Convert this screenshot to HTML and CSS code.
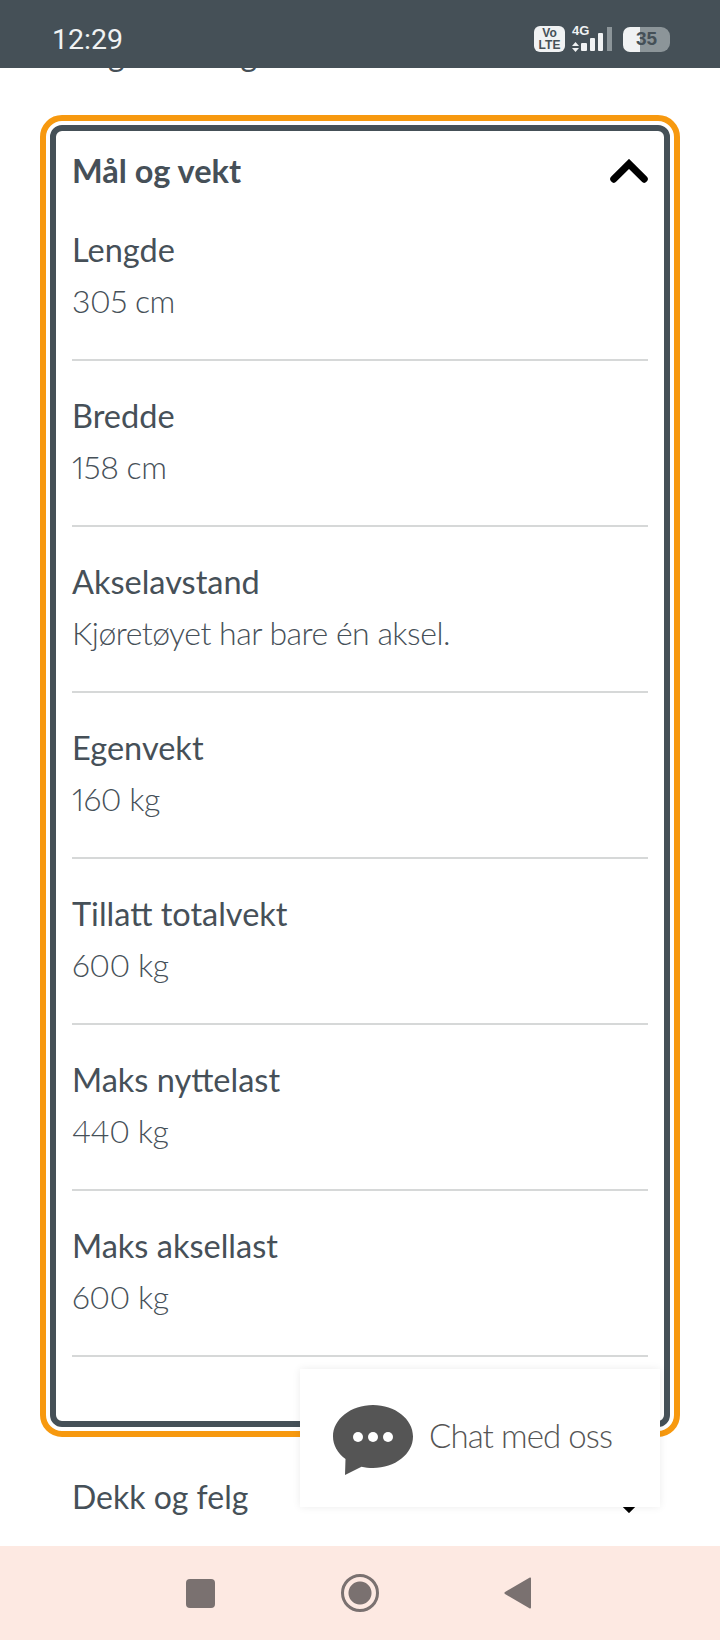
FILE: index.html
```html
<!DOCTYPE html>
<html lang="no">
<head>
<meta charset="utf-8">
<title>Mål og vekt</title>
<link rel="stylesheet" href="styles.css">
</head>
<body>
<div class="phone">
  <header class="status">
    <span class="time">12:29</span>
    <div class="status-icons">
      <div class="volte"><span>Vo</span><span>LTE</span></div>
      <div class="net">
        <span class="net-label">4G</span>
        <svg class="net-arrows" width="7" height="10" viewBox="0 0 7 10"><path d="M3.500 0 7 4H0zM0 6h7l-3.500 4z" fill="#f0f2f3"/></svg>
      </div>
      <svg class="bars" width="31" height="25" viewBox="0 0 31 25"><rect x="0" y="16" width="6" height="8" rx="1" fill="#f0f2f3"/><rect x="9" y="11" width="5" height="13" rx="1" fill="#f0f2f3"/><rect x="17" y="6" width="5" height="18" rx="1" fill="#f0f2f3"/><rect x="26" y="0" width="5" height="24" fill="#8c9599"/></svg>
      <div class="battery"><span class="battery-level">35</span></div>
    </div>
  </header>

  <main class="content">
    <div class="cut-row">Regulert lengde</div>

    <section class="panel">
      <div class="panel-inner">
        <div class="panel-head">
          <h2>Mål og vekt</h2>
          <svg class="chev" width="40" height="26" viewBox="0 0 40 26"><path d="M4 21 20 5l16 16" fill="none" stroke="#000" stroke-width="7.500" stroke-linecap="round" stroke-linejoin="miter"/></svg>
        </div>
        <div class="row"><div class="label">Lengde</div><div class="value">305 cm</div></div>
        <div class="row"><div class="label">Bredde</div><div class="value">158 cm</div></div>
        <div class="row"><div class="label">Akselavstand</div><div class="value">Kjøretøyet har bare én aksel.</div></div>
        <div class="row"><div class="label">Egenvekt</div><div class="value">160 kg</div></div>
        <div class="row"><div class="label">Tillatt totalvekt</div><div class="value">600 kg</div></div>
        <div class="row"><div class="label">Maks nyttelast</div><div class="value">440 kg</div></div>
        <div class="row"><div class="label">Maks aksellast</div><div class="value">600 kg</div></div>
      </div>
    </section>

    <div class="collapsed">
      <span>Dekk og felg</span>
      <svg class="chev chev-down" width="40" height="26" viewBox="0 0 40 26"><path d="M4 5 20 21 36 5" fill="none" stroke="#000" stroke-width="7.500" stroke-linecap="round"/></svg>
    </div>
  </main>

  <aside class="chat">
    <svg width="80" height="70" viewBox="0 0 80 70"><path d="M40 0C62 0 80 14 80 31.500 80 49 62 63 40 63c-4 0-8-.4-11.500-1.300L12 70l.500-16C4.500 48 0 40 0 31.500 0 14 18 0 40 0z" fill="#555"/><circle cx="25" cy="32" r="5" fill="#fff"/><circle cx="40" cy="32" r="5" fill="#fff"/><circle cx="55" cy="32" r="5" fill="#fff"/></svg>
    <span class="chat-text">Chat med oss</span>
  </aside>

  <nav class="navbar">
    <span class="nav-square"></span>
    <span class="nav-circle"></span>
    <svg width="28" height="32" viewBox="0 0 28 32"><path d="M27 1.500v29a1 1 0 0 1-1.600.8L1 17a1.300 1.300 0 0 1 0-2L25.400.700A1 1 0 0 1 27 1.500z" fill="#7a7170"/></svg>
  </nav>
</div>
</body>
</html>
```
FILE: styles.css
```css
* { box-sizing: border-box; }
html, body { margin: 0; padding: 0; }
body { font-family: Lato, "Open Sans", sans-serif; color: #465058; background: #fff; }
.phone { position: relative; width: 720px; height: 1640px; display: flex; flex-direction: column; overflow: hidden; }

.status { flex: 0 0 68px; background: #455057; display: flex; align-items: center; justify-content: space-between; padding: 10px 50px 0 52px; z-index: 1; }
.time { font-family: Roboto, sans-serif; font-weight: 400; font-size: 28.500px; color: #f0f2f3; }
.status-icons { display: flex; align-items: center; }
.volte { width: 31px; height: 26px; border-radius: 6px; background: #f0f2f3; color: #455057; font-family: "Liberation Sans", sans-serif; font-weight: 700; font-size: 12px; line-height: 12px; display: flex; flex-direction: column; align-items: center; justify-content: center; }
.net { width: 9px; margin-left: 7px; height: 26px; display: flex; flex-direction: column; justify-content: space-between; }
.net-label { font-family: "Liberation Sans", sans-serif; font-weight: 700; font-size: 13px; line-height: 10px; color: #f0f2f3; white-space: nowrap; }
.bars { margin-top: 1px; }
.battery { width: 47px; height: 25px; margin-left: 11px; border-radius: 7px 9px 9px 7px; background: linear-gradient(90deg, #f0f2f3 0 17px, #8c9599 17px); display: flex; align-items: center; justify-content: center; }
.battery-level { font-family: "Liberation Sans", sans-serif; font-weight: 700; font-size: 19px; color: #455057; }

.content { flex: 1 1 0; min-height: 0; overflow: hidden; padding: 0 40px; }
.cut-row { height: 47px; margin: -38px 0 38px; padding-left: 32px; font-size: 32px; line-height: 47px; white-space: nowrap; color: #465058; }
.panel { height: 1322px; border: 6px solid #f7990f; border-radius: 22px; padding: 4px; background: #fff; }
.panel-inner { height: 100%; border: 6px solid #455057; border-radius: 12px; padding: 0 16px; }
.panel-head { height: 64px; display: flex; align-items: center; justify-content: space-between; padding-top: 16px; }
.panel-head h2 { margin: 0; font-size: 32.500px; font-weight: 700; line-height: 48px; color: #465058; }
.chev { display: block; width: 38px; height: 25px; margin-right: 0; flex: none; }
.chev-down { position: relative; top: 3px; }
.row { height: 166px; padding-top: 37px; border-bottom: 2px solid #d6d8d8; }
.label { font-size: 32.500px; line-height: 36px; color: #465058; }
.value { margin-top: 15px; font-size: 32px; font-weight: 300; font-variant-numeric: proportional-nums; letter-spacing: -.5px; line-height: 36px; color: #465058; }

.collapsed { display: flex; align-items: center; justify-content: space-between; margin-top: 37px; padding: 0 32px; height: 46px; font-size: 32px; line-height: 46px; color: #465058; }

.chat { position: absolute; left: 300px; top: 1369px; width: 360px; height: 138px; padding: 3px 0 0 33px; background: #fff; box-shadow: 0 0 8px rgba(0,0,0,.08); display: flex; align-items: center; gap: 16px; font-size: 33px; font-weight: 300; letter-spacing: -.9px; color: #555; }
.chat-text { position: relative; top: -5px; }

.navbar { flex: 0 0 94px; background: #fde9e2; display: flex; align-items: center; padding: 0 0 0 186px; }
.nav-square { width: 29px; height: 29px; border-radius: 4px; background: #7a7170; }
.nav-circle { width: 38px; height: 38px; margin-left: 126px; border-radius: 50%; border: 3px solid #7a7170; background: radial-gradient(circle, #7a7170 0 11px, transparent 12px); }
.navbar svg { margin-left: 125px; }
```
